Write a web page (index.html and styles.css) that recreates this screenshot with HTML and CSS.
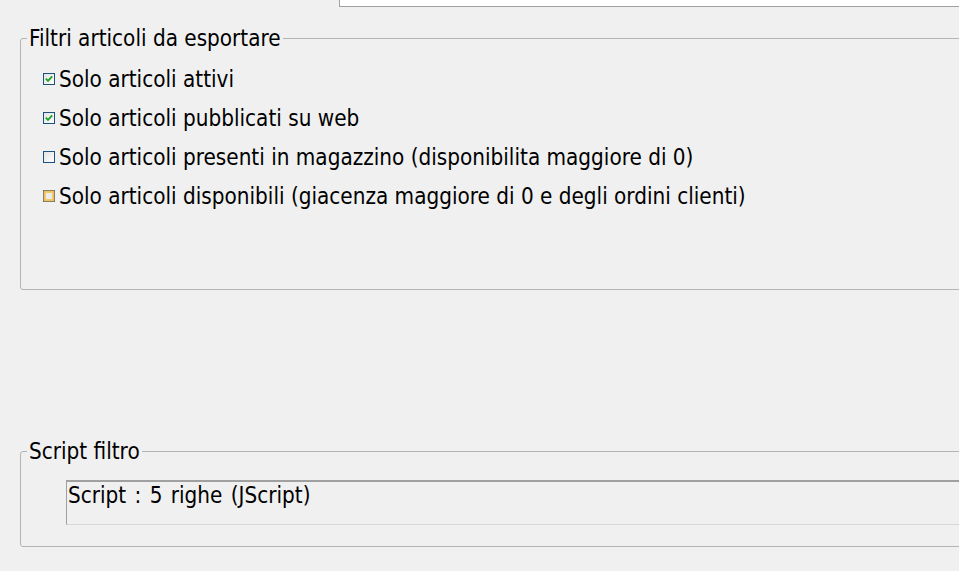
FILE: index.html
```html
<!DOCTYPE html>
<html lang="it">
<head>
<meta charset="utf-8">
<title>Filtri</title>
<link rel="stylesheet" href="styles.css">
</head>
<body>
<div class="top-input"></div>

<fieldset class="group group-filters">
  <legend class="group-title">Filtri articoli da esportare</legend>
  <div class="filter-list">
    <div class="check-row">
      <svg class="cb" width="12" height="12" viewBox="0 0 12 12"><defs><linearGradient id="g1" x1="0" y1="0" x2="1" y2="1"><stop offset="0" stop-color="#e2e2e2"/><stop offset="1" stop-color="#ffffff"/></linearGradient></defs><rect x="0.5" y="0.5" width="11" height="11" fill="url(#g1)" stroke="#1c5180"/><path d="M2.8 5.6 L5 7.8 L9.2 3.4" fill="none" stroke="#1fa52a" stroke-width="1.9"/></svg>
      <span>Solo articoli attivi</span>
    </div>
    <div class="check-row">
      <svg class="cb" width="12" height="12" viewBox="0 0 12 12"><rect x="0.5" y="0.5" width="11" height="11" fill="url(#g1)" stroke="#1c5180"/><path d="M2.8 5.6 L5 7.8 L9.2 3.4" fill="none" stroke="#1fa52a" stroke-width="1.9"/></svg>
      <span>Solo articoli pubblicati su web</span>
    </div>
    <div class="check-row">
      <svg class="cb" width="12" height="12" viewBox="0 0 12 12"><rect x="0.5" y="0.5" width="11" height="11" fill="url(#g1)" stroke="#1c5180"/></svg>
      <span>Solo articoli presenti in magazzino (disponibilita maggiore di 0)</span>
    </div>
    <div class="check-row">
      <svg class="cb" width="12" height="12" viewBox="0 0 12 12"><rect x="0.5" y="0.5" width="11" height="11" fill="#f4c865" stroke="#1c5180"/><rect x="1" y="1" width="10" height="10" fill="none" stroke="#f0b850" stroke-width="1"/><rect x="3" y="3" width="6" height="6" fill="#ebebeb"/></svg>
      <span>Solo articoli disponibili (giacenza maggiore di 0 e degli ordini clienti)</span>
    </div>
  </div>
</fieldset>

<fieldset class="group group-script">
  <legend class="group-title">Script filtro</legend>
  <div class="script-box">Script : 5 righe (JScript)</div>
</fieldset>
</body>
</html>
```

FILE: styles.css
```css
html, body {
  margin: 0;
  padding: 0;
}
body {
  background: #f0f0f0;
  width: 959px;
  height: 571px;
  overflow: hidden;
  font-family: "DejaVu Sans", "Liberation Sans", sans-serif;
  font-stretch: condensed;
  font-size: 22.3px;
  color: #000;
}
.top-input {
  margin-left: 339px;
  height: 6px;
  background: #fff;
  border-left: 1px solid #a0a0a0;
  border-bottom: 1px solid #a0a0a0;
}
.group {
  margin: 0 -40px 0 20px;
  padding: 0 0 0 6px;
  border: 1px solid #b4b4b4;
  border-radius: 3px;
  min-width: 0;
}
.group-filters {
  margin-top: 19px;
}
.group-script {
  margin-top: 149px;
}
.group-title {
  padding: 0 2px;
  line-height: 24px;
  height: 24px;
}
.filter-list {
  height: 239px;
  box-sizing: border-box;
  padding: 9px 0 0 16px;
}
.check-row {
  display: flex;
  align-items: center;
  height: 39px;
  white-space: nowrap;
}
.cb {
  flex: none;
  margin-right: 4px;
}
.script-box {
  margin: 17px 0 21px 39px;
  height: 42px;
  box-sizing: content-box;
  border-top: 2px solid #a0a0a0;
  border-left: 1px solid #a0a0a0;
  border-bottom: 1px solid #d6d6dc;
  padding-left: 1px;
  line-height: 26px;
  word-spacing: 2px;
  white-space: nowrap;
}
```
